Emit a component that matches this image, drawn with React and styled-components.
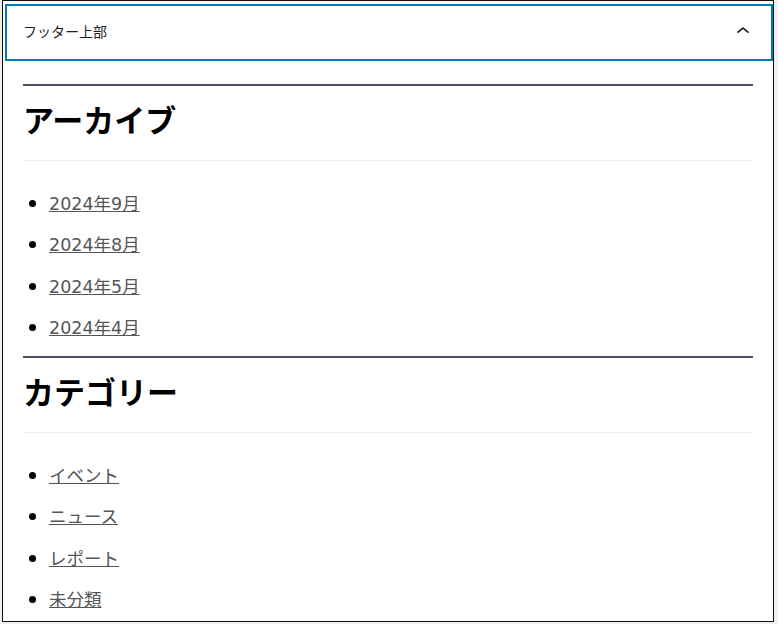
import React from 'react'
import styled, { createGlobalStyle } from 'styled-components'

const GlobalStyle = createGlobalStyle`
  html, body {
    margin: 0;
    padding: 0;
    background: #f0f0f0;
  }
  body {
    font-family: "Noto Sans CJK JP", "Noto Sans", sans-serif;
    color: #000;
  }
`

const sections = [
  {
    title: 'アーカイブ',
    items: ['2024年9月', '2024年8月', '2024年5月', '2024年4月'],
  },
  {
    title: 'カテゴリー',
    items: ['イベント', 'ニュース', 'レポート', '未分類'],
  },
]

function ChevronUp() {
  return (
    <svg width="24" height="24" viewBox="0 0 24 24" aria-hidden="true">
      <path d="M6.4 13.6L12 9.1l5.6 4.5" fill="none" stroke="#1e1e1e" strokeWidth="1.6" />
    </svg>
  )
}

export default function App() {
  return (
    <>
      <GlobalStyle />
      <Panel>
        <PanelHeader>
          <HeaderTitle>フッター上部</HeaderTitle>
          <ToggleButton type="button" aria-expanded="true">
            <ChevronUp />
          </ToggleButton>
        </PanelHeader>
        <PanelBody>
          {sections.map((section) => (
            <Widget key={section.title}>
              <WidgetTitle>{section.title}</WidgetTitle>
              <WidgetList>
                {section.items.map((item) => (
                  <WidgetItem key={item}>
                    <WidgetLink href="#">{item}</WidgetLink>
                  </WidgetItem>
                ))}
              </WidgetList>
            </Widget>
          ))}
        </PanelBody>
      </Panel>
    </>
  )
}

const Panel = styled.div`
  box-sizing: border-box;
  margin-left: 2px;
  width: 772px;
  height: 622px;
  background: #fff;
  border: 1px solid #111;
  overflow: hidden;
`

const PanelHeader = styled.div`
  box-sizing: border-box;
  display: flex;
  align-items: center;
  justify-content: space-between;
  height: 57px;
  margin: 3px 0 0 2px;
  padding: 0 16px;
  border: 2px solid #007cba;
`

const HeaderTitle = styled.span`
  font-size: 14px;
  color: #1e1e1e;
  margin-top: -4px;
`

const ToggleButton = styled.button`
  display: flex;
  align-items: center;
  justify-content: center;
  padding: 0;
  margin-top: -3px;
  border: none;
  background: none;
`

const PanelBody = styled.div`
  padding: 23px 20px 0;
`

const Widget = styled.section`
  border-top: 2px solid #4a5160;
  padding-bottom: 9px;
`

const WidgetTitle = styled.h2`
  margin: 12px 0 0;
  padding-bottom: 20px;
  border-bottom: 1px solid #ececec;
  font-size: 31px;
  line-height: 42px;
  font-weight: 700;
  color: #000;
`

const WidgetList = styled.ul`
  margin: 21px 0 0;
  padding-left: 26px;
`

const WidgetItem = styled.li`
  height: 41.3px;
  line-height: 42px;
  font-size: 17px;
`

const WidgetLink = styled.a`
  font-family: "DejaVu Sans", "Noto Sans CJK JP", sans-serif;
  font-size: 17.5px;
  color: #555;
  text-decoration: underline;
`
